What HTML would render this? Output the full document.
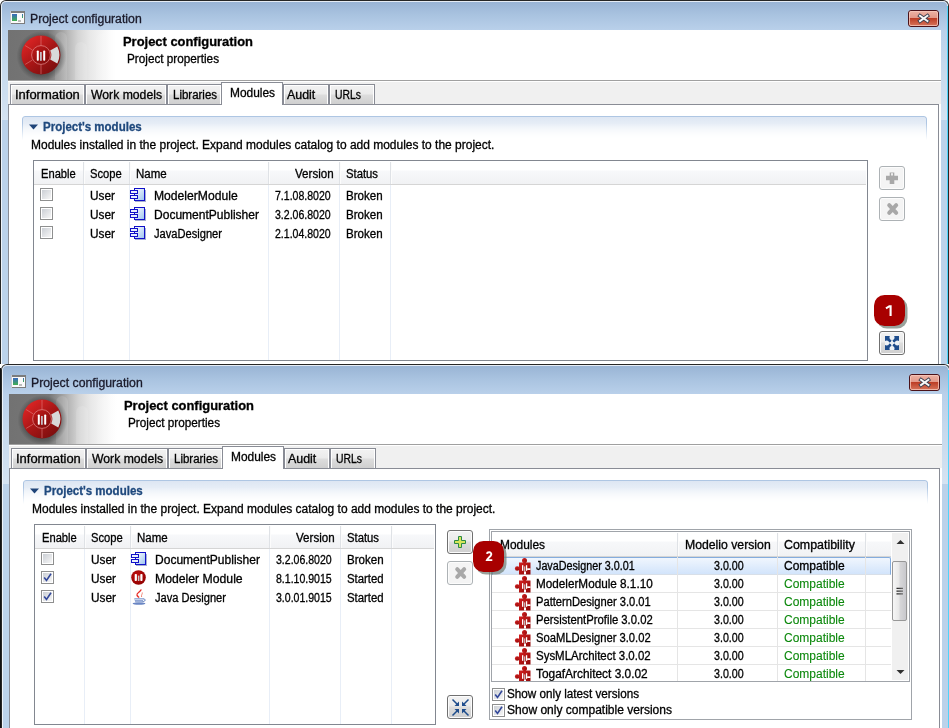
<!DOCTYPE html>
<html><head><meta charset="utf-8"><style>
html,body{margin:0;padding:0;background:#fff;width:949px;height:728px;overflow:hidden;position:relative}
.t{position:absolute;font-family:"Liberation Sans",sans-serif;white-space:pre;transform-origin:0 0;-webkit-text-stroke:0.3px currentColor}
svg{overflow:visible}
</style></head><body>
<div style="position:absolute;left:0px;top:0px;width:949px;height:364px;box-sizing:border-box;border:1px solid #262626;border-bottom:none;border-radius:6px 6px 0 0;background:linear-gradient(#98b3d4 0px,#a9c3e0 14px,#b9d0ea 29px,#bbd2ea 60px);overflow:hidden"></div>
<div style="position:absolute;left:1px;top:1px;width:947px;height:363px;box-sizing:border-box;border:1px solid rgba(255,255,255,0.75);border-bottom:none;border-radius:5px 5px 0 0"></div>
<div style="position:absolute;left:2px;top:28px;width:6px;height:92px;background:linear-gradient(rgba(255,255,255,0) 0%,rgba(255,255,255,0.38) 100%)"></div>
<div style="position:absolute;left:941px;top:28px;width:6px;height:92px;background:linear-gradient(rgba(255,255,255,0) 0%,rgba(255,255,255,0.38) 100%)"></div>
<div style="position:absolute;left:947px;top:6px;width:1px;height:358px;background:#4fd3fa"></div>
<svg style="position:absolute;left:10px;top:11px;" width="15" height="13" viewBox="0 0 15 13">
<defs><linearGradient id="tig" x1="0" y1="0" x2="0" y2="1">
<stop offset="0" stop-color="#3a68c0"></stop><stop offset="1" stop-color="#40b050"></stop></linearGradient></defs>
<rect x="0" y="0" width="15" height="13" fill="#fafafa"></rect>
<rect x="0" y="0" width="15" height="2" fill="#7c7c7c"></rect>
<rect x="14" y="0" width="1" height="13" fill="#7c7c7c"></rect>
<rect x="0" y="12" width="15" height="1" fill="#7c7c7c"></rect>
<rect x="0" y="0" width="1" height="13" fill="#c8c8d0"></rect>
<rect x="2" y="3" width="5" height="7" fill="url(#tig)"></rect>
<rect x="12" y="3" width="1" height="4" fill="url(#tig)"></rect>
<rect x="8" y="9" width="3" height="2" fill="#bcbcbc"></rect>
</svg>
<div class="t" style="left: 30px; top: 12px; font-size: 12px; line-height: 14px; color: rgb(26, 26, 42); transform: scaleX(1.021);">Project configuration</div>
<svg style="position:absolute;left:908px;top:10px;" width="31" height="17" viewBox="0 0 31 17">
<defs><linearGradient id="cbg" x1="0" y1="0" x2="0" y2="1">
<stop offset="0" stop-color="#eeb4a6"></stop><stop offset="0.47" stop-color="#e29888"></stop>
<stop offset="0.48" stop-color="#bc3c24"></stop><stop offset="1" stop-color="#d8785e"></stop></linearGradient></defs>
<rect x="0.5" y="0.5" width="30" height="16" rx="2.5" fill="url(#cbg)" stroke="#4a1219"></rect>
<rect x="1.5" y="1.5" width="28" height="14" rx="1.5" fill="none" stroke="#f6c8bc" stroke-opacity="0.8"></rect>
<path d="M12 5.8 L19.4 11 M19.4 5.8 L12 11" stroke="#3c4050" stroke-width="3.8" stroke-linecap="square"></path>
<path d="M12 5.8 L19.4 11 M19.4 5.8 L12 11" stroke="#f8f8f8" stroke-width="2.0" stroke-linecap="square"></path>
</svg>
<div style="position:absolute;left:8px;top:30px;width:933px;height:334px;background:#f0f0f0"></div>
<div style="position:absolute;left:8px;top:30px;width:933px;height:50px;background:linear-gradient(90deg,#727272 0px,#767676 40px,#9c9c9c 52px,#b8b8b8 60px,#d4d4d4 70px,#e8e8e8 82px,#f4f4f4 94px,#fcfcfc 102px,#ffffff 108px)"></div>
<div style="position:absolute;left:55px;top:32px;width:12px;height:48px;background:rgba(255,255,255,0.12);border-radius:6px 6px 0 0"></div>
<div style="position:absolute;left:75px;top:42px;width:12px;height:38px;background:rgba(255,255,255,0.13);border-radius:6px 6px 0 0"></div>
<div style="position:absolute;left:96px;top:33px;width:15px;height:47px;background:rgba(255,255,255,0.10);border-radius:7px 7px 0 0"></div>
<svg style="position:absolute;left:19.299999999999997px;top:32.5px;" width="48" height="48" viewBox="0 0 48 48">
<defs>
<linearGradient id="lgr" x1="0.15" y1="0.1" x2="0.85" y2="0.9">
<stop offset="0" stop-color="#dc2424"></stop><stop offset="0.5" stop-color="#a81616"></stop><stop offset="1" stop-color="#7c0e0e"></stop></linearGradient>
<linearGradient id="lgi" x1="0.2" y1="0.1" x2="0.8" y2="0.9">
<stop offset="0" stop-color="#b81818"></stop><stop offset="1" stop-color="#840c0c"></stop></linearGradient>
<radialGradient id="lsh" cx="0.5" cy="0.5" r="0.5">
<stop offset="0.72" stop-color="#000" stop-opacity="0.32"></stop><stop offset="1" stop-color="#000" stop-opacity="0"></stop></radialGradient>
</defs>
<circle cx="22.5" cy="23" r="25" fill="url(#lsh)"></circle>
<circle cx="22" cy="22" r="19.5" fill="url(#lgr)"></circle>
<path d="M31.2 17.5 L38.3 13.5 A19 19 0 0 1 38.3 30.5 L31.2 26.5 A9.8 9.8 0 0 0 31.2 17.5 Z" fill="#d8d8d8"></path>
<circle cx="22" cy="22" r="9.4" fill="url(#lgi)" stroke="#e08080" stroke-width="0.8"></circle>
<rect x="17.8" y="17.4" width="2" height="10.4" rx="0.8" fill="#fff"></rect>
<rect x="21.1" y="19" width="1.6" height="8.8" fill="#c8d0d8"></rect>
<rect x="24.2" y="17.4" width="2" height="10.4" rx="0.8" fill="#fff"></rect>
<path d="M22 3 V12.4 M22 31.6 V41 M6.2 12.6 L13.4 17 M6.2 31.4 L13.4 27" stroke="#e89090" stroke-width="0.6" stroke-opacity="0.85"></path>
</svg>
<div style="position:absolute;left:8px;top:80px;width:933px;height:1px;background:#a0a0a0"></div>
<div style="position:absolute;left:8px;top:81px;width:933px;height:1px;background:#ffffff"></div>
<div class="t" style="left: 123px; top: 34px; font-size: 13px; line-height: 15px; color: rgb(0, 0, 0); font-weight: bold; transform: scaleX(0.994);">Project configuration</div>
<div class="t" style="left: 127px; top: 52px; font-size: 12px; line-height: 14px; color: rgb(0, 0, 0); transform: scaleX(0.9783);">Project properties</div>
<div style="position:absolute;left:8px;top:104px;width:931px;height:260px;background:#fff;border:1px solid #898c95;border-bottom:none;box-sizing:border-box"></div>
<div style="position:absolute;left:939px;top:104px;width:2px;height:260px;background:#fff"></div>
<div style="position:absolute;left:10px;top:84px;width:75px;height:21px;box-sizing:border-box;border:1px solid #898c95;background:linear-gradient(#f2f2f2 0px,#ebebeb 9px,#dddddd 10px,#cfcfcf 19px);box-shadow:inset 1px 1px 0 #fff, inset -1px 0 0 #fff"></div>
<div class="t" style="left: 14.92px; top: 88px; font-size: 12px; line-height: 14px; color: rgb(0, 0, 0); transform: scaleX(1.0796);">Information</div>
<div style="position:absolute;left:85px;top:84px;width:82px;height:21px;box-sizing:border-box;border:1px solid #898c95;background:linear-gradient(#f2f2f2 0px,#ebebeb 9px,#dddddd 10px,#cfcfcf 19px);box-shadow:inset 1px 1px 0 #fff, inset -1px 0 0 #fff"></div>
<div class="t" style="left: 91px; top: 88px; font-size: 12px; line-height: 14px; color: rgb(0, 0, 0); transform: scaleX(1.0172);">Work models</div>
<div style="position:absolute;left:167px;top:84px;width:55px;height:21px;box-sizing:border-box;border:1px solid #898c95;background:linear-gradient(#f2f2f2 0px,#ebebeb 9px,#dddddd 10px,#cfcfcf 19px);box-shadow:inset 1px 1px 0 #fff, inset -1px 0 0 #fff"></div>
<div class="t" style="left: 173px; top: 88px; font-size: 12px; line-height: 14px; color: rgb(0, 0, 0); transform: scaleX(0.9561);">Libraries</div>
<div style="position:absolute;left:283px;top:84px;width:46px;height:21px;box-sizing:border-box;border:1px solid #898c95;background:linear-gradient(#f2f2f2 0px,#ebebeb 9px,#dddddd 10px,#cfcfcf 19px);box-shadow:inset 1px 1px 0 #fff, inset -1px 0 0 #fff"></div>
<div class="t" style="left: 287px; top: 88px; font-size: 12px; line-height: 14px; color: rgb(0, 0, 0); transform: scaleX(1.0351);">Audit</div>
<div style="position:absolute;left:329px;top:84px;width:46px;height:21px;box-sizing:border-box;border:1px solid #898c95;background:linear-gradient(#f2f2f2 0px,#ebebeb 9px,#dddddd 10px,#cfcfcf 19px);box-shadow:inset 1px 1px 0 #fff, inset -1px 0 0 #fff"></div>
<div class="t" style="left: 335px; top: 88px; font-size: 12px; line-height: 14px; color: rgb(0, 0, 0); transform: scaleX(0.8665);">URLs</div>
<div style="position:absolute;left:221px;top:82px;width:62px;height:23px;box-sizing:border-box;border:1px solid #898c95;border-bottom:none;background:#fff"></div>
<div class="t" style="left: 230px; top: 86px; font-size: 12px; line-height: 14px; color: rgb(0, 0, 0); transform: scaleX(0.9921);">Modules</div>
<div style="position:absolute;left:22px;top:116px;width:905px;height:24px;box-sizing:border-box;border:1px solid #aec6e3;border-bottom:none;border-radius:3px 3px 0 0;background:linear-gradient(#dde6f3 0px,#eef3f9 12px,#ffffff 23px);-webkit-mask-image:linear-gradient(#000 30%,rgba(0,0,0,0))"></div>
<svg style="position:absolute;left:29px;top:124px;" width="9" height="6" viewBox="0 0 9 6"><path d="M0 0.5 H9 L4.5 5.5 Z" fill="#1f4478"></path></svg>
<div class="t" style="left: 43px; top: 120px; font-size: 12px; line-height: 14px; color: rgb(31, 73, 125); font-weight: bold; transform: scaleX(0.9592);">Project's modules</div>
<div class="t" style="left: 31px; top: 138px; font-size: 12px; line-height: 14px; color: rgb(0, 0, 0); transform: scaleX(0.998);">Modules installed in the project. Expand modules catalog to add modules to the project.</div>
<div style="position:absolute;left:33px;top:160px;width:835px;height:201px;box-sizing:border-box;border:1px solid #828790;background:#fff"></div>
<div style="position:absolute;left:34px;top:161px;width:832px;height:23px;background:linear-gradient(#ffffff 0px,#ffffff 9px,#f7f8fa 10px,#f1f2f4 23px)"></div>
<div style="position:absolute;left:34px;top:184px;width:832px;height:1px;background:#d5d5d5"></div>
<div style="position:absolute;left:83px;top:162px;width:1px;height:22px;background:#dfe2e6"></div>
<div style="position:absolute;left:84px;top:162px;width:1px;height:22px;background:#fcfcfc"></div>
<div style="position:absolute;left:83px;top:185px;width:1px;height:175px;background:#e8eef7"></div>
<div style="position:absolute;left:129px;top:162px;width:1px;height:22px;background:#dfe2e6"></div>
<div style="position:absolute;left:130px;top:162px;width:1px;height:22px;background:#fcfcfc"></div>
<div style="position:absolute;left:129px;top:185px;width:1px;height:175px;background:#e8eef7"></div>
<div style="position:absolute;left:268px;top:162px;width:1px;height:22px;background:#dfe2e6"></div>
<div style="position:absolute;left:269px;top:162px;width:1px;height:22px;background:#fcfcfc"></div>
<div style="position:absolute;left:268px;top:185px;width:1px;height:175px;background:#e8eef7"></div>
<div style="position:absolute;left:339px;top:162px;width:1px;height:22px;background:#dfe2e6"></div>
<div style="position:absolute;left:340px;top:162px;width:1px;height:22px;background:#fcfcfc"></div>
<div style="position:absolute;left:339px;top:185px;width:1px;height:175px;background:#e8eef7"></div>
<div style="position:absolute;left:390px;top:162px;width:1px;height:22px;background:#dfe2e6"></div>
<div style="position:absolute;left:391px;top:162px;width:1px;height:22px;background:#fcfcfc"></div>
<div style="position:absolute;left:390px;top:185px;width:1px;height:175px;background:#e8eef7"></div>
<div class="t" style="left: 41px; top: 167px; font-size: 12px; line-height: 14px; color: rgb(0, 0, 0); transform: scaleX(0.9286);">Enable</div>
<div class="t" style="left: 90px; top: 167px; font-size: 12px; line-height: 14px; color: rgb(0, 0, 0); transform: scaleX(0.9315);">Scope</div>
<div class="t" style="left: 136px; top: 167px; font-size: 12px; line-height: 14px; color: rgb(0, 0, 0); transform: scaleX(0.9587);">Name</div>
<div class="t" style="left: 295px; top: 167px; font-size: 12px; line-height: 14px; color: rgb(0, 0, 0); transform: scaleX(0.9657);">Version</div>
<div class="t" style="left: 346px; top: 167px; font-size: 12px; line-height: 14px; color: rgb(0, 0, 0); transform: scaleX(0.9406);">Status</div>
<svg style="position:absolute;left:40px;top:188px;" width="13" height="13" viewBox="0 0 13 13">
<defs><linearGradient id="cbx40188" x1="0" y1="0" x2="1" y2="1">
<stop offset="0" stop-color="#cbcfd5"></stop><stop offset="1" stop-color="#f6f6f6"></stop></linearGradient></defs>
<rect x="0.5" y="0.5" width="12" height="12" fill="#fff" stroke="#8e8f8f"></rect>
<rect x="2" y="2" width="9" height="9" fill="url(#cbx40188)"></rect>

</svg>
<div class="t" style="left: 90px; top: 189px; font-size: 12px; line-height: 14px; color: rgb(0, 0, 0); transform: scaleX(0.9866);">User</div>
<svg style="position:absolute;left:130px;top:188px;" width="16" height="14" viewBox="0 0 16 14">
<defs><linearGradient id="cig" x1="0" y1="0" x2="1" y2="1">
<stop offset="0" stop-color="#ffffff"></stop><stop offset="1" stop-color="#9cc4f0"></stop></linearGradient></defs>
<rect x="4.5" y="0.5" width="10" height="12" fill="url(#cig)" stroke="#1010c8"></rect>
<rect x="15" y="2" width="1" height="11" fill="#6a7ab0" opacity="0.6"></rect>
<rect x="5" y="13" width="11" height="1" fill="#6a7ab0" opacity="0.6"></rect>
<rect x="0.5" y="2.5" width="7" height="3" fill="#e8f0ff" stroke="#1010c8"></rect>
<rect x="0.5" y="7.5" width="7" height="3" fill="#e8f0ff" stroke="#1010c8"></rect>
</svg>
<div class="t" style="left: 154px; top: 189px; font-size: 12px; line-height: 14px; color: rgb(0, 0, 0); transform: scaleX(1.0116);">ModelerModule</div>
<div class="t" style="left: 275px; top: 189px; font-size: 12px; line-height: 14px; color: rgb(0, 0, 0); transform: scaleX(0.8789);">7.1.08.8020</div>
<div class="t" style="left: 346px; top: 189px; font-size: 12px; line-height: 14px; color: rgb(0, 0, 0); transform: scaleX(0.9639);">Broken</div>
<svg style="position:absolute;left:40px;top:207px;" width="13" height="13" viewBox="0 0 13 13">
<defs><linearGradient id="cbx40207" x1="0" y1="0" x2="1" y2="1">
<stop offset="0" stop-color="#cbcfd5"></stop><stop offset="1" stop-color="#f6f6f6"></stop></linearGradient></defs>
<rect x="0.5" y="0.5" width="12" height="12" fill="#fff" stroke="#8e8f8f"></rect>
<rect x="2" y="2" width="9" height="9" fill="url(#cbx40207)"></rect>

</svg>
<div class="t" style="left: 90px; top: 208px; font-size: 12px; line-height: 14px; color: rgb(0, 0, 0); transform: scaleX(0.9866);">User</div>
<svg style="position:absolute;left:130px;top:207px;" width="16" height="14" viewBox="0 0 16 14">
<defs><linearGradient id="cig" x1="0" y1="0" x2="1" y2="1">
<stop offset="0" stop-color="#ffffff"></stop><stop offset="1" stop-color="#9cc4f0"></stop></linearGradient></defs>
<rect x="4.5" y="0.5" width="10" height="12" fill="url(#cig)" stroke="#1010c8"></rect>
<rect x="15" y="2" width="1" height="11" fill="#6a7ab0" opacity="0.6"></rect>
<rect x="5" y="13" width="11" height="1" fill="#6a7ab0" opacity="0.6"></rect>
<rect x="0.5" y="2.5" width="7" height="3" fill="#e8f0ff" stroke="#1010c8"></rect>
<rect x="0.5" y="7.5" width="7" height="3" fill="#e8f0ff" stroke="#1010c8"></rect>
</svg>
<div class="t" style="left: 154px; top: 208px; font-size: 12px; line-height: 14px; color: rgb(0, 0, 0); transform: scaleX(1.0026);">DocumentPublisher</div>
<div class="t" style="left: 275px; top: 208px; font-size: 12px; line-height: 14px; color: rgb(0, 0, 0); transform: scaleX(0.8789);">3.2.06.8020</div>
<div class="t" style="left: 346px; top: 208px; font-size: 12px; line-height: 14px; color: rgb(0, 0, 0); transform: scaleX(0.9639);">Broken</div>
<svg style="position:absolute;left:40px;top:226px;" width="13" height="13" viewBox="0 0 13 13">
<defs><linearGradient id="cbx40226" x1="0" y1="0" x2="1" y2="1">
<stop offset="0" stop-color="#cbcfd5"></stop><stop offset="1" stop-color="#f6f6f6"></stop></linearGradient></defs>
<rect x="0.5" y="0.5" width="12" height="12" fill="#fff" stroke="#8e8f8f"></rect>
<rect x="2" y="2" width="9" height="9" fill="url(#cbx40226)"></rect>

</svg>
<div class="t" style="left: 90px; top: 227px; font-size: 12px; line-height: 14px; color: rgb(0, 0, 0); transform: scaleX(0.9866);">User</div>
<svg style="position:absolute;left:130px;top:226px;" width="16" height="14" viewBox="0 0 16 14">
<defs><linearGradient id="cig" x1="0" y1="0" x2="1" y2="1">
<stop offset="0" stop-color="#ffffff"></stop><stop offset="1" stop-color="#9cc4f0"></stop></linearGradient></defs>
<rect x="4.5" y="0.5" width="10" height="12" fill="url(#cig)" stroke="#1010c8"></rect>
<rect x="15" y="2" width="1" height="11" fill="#6a7ab0" opacity="0.6"></rect>
<rect x="5" y="13" width="11" height="1" fill="#6a7ab0" opacity="0.6"></rect>
<rect x="0.5" y="2.5" width="7" height="3" fill="#e8f0ff" stroke="#1010c8"></rect>
<rect x="0.5" y="7.5" width="7" height="3" fill="#e8f0ff" stroke="#1010c8"></rect>
</svg>
<div class="t" style="left: 154px; top: 227px; font-size: 12px; line-height: 14px; color: rgb(0, 0, 0); transform: scaleX(0.9267);">JavaDesigner</div>
<div class="t" style="left: 275px; top: 227px; font-size: 12px; line-height: 14px; color: rgb(0, 0, 0); transform: scaleX(0.8789);">2.1.04.8020</div>
<div class="t" style="left: 346px; top: 227px; font-size: 12px; line-height: 14px; color: rgb(0, 0, 0); transform: scaleX(0.9639);">Broken</div>
<div style="position:absolute;left:879px;top:166px;width:26px;height:24px;box-sizing:border-box;border:1px solid #adb2b5;border-radius:3px;background:#f4f4f4;box-shadow:inset 0 0 0 1px #fcfcfc"></div>
<svg style="position:absolute;left:886px;top:172px;" width="12" height="12" viewBox="0 0 12 12"><path d="M3.7 0.5 H8.3 V3.7 H12 V8.3 H8.3 V12 H3.7 V8.3 H0 V3.7 H3.7 Z" fill="#a8a8a8"></path><rect x="5" y="1.2" width="2" height="2.3" fill="#ececec"></rect></svg>
<div style="position:absolute;left:879px;top:197px;width:26px;height:24px;box-sizing:border-box;border:1px solid #adb2b5;border-radius:3px;background:#f4f4f4;box-shadow:inset 0 0 0 1px #fcfcfc"></div>
<svg style="position:absolute;left:887px;top:203px;" width="12" height="12" viewBox="0 0 12 12"><path d="M2.2 2.2 L9.2 9.8 M9.2 2.2 L2.2 9.8" stroke="#a8a8a8" stroke-width="4" stroke-linecap="round"></path></svg>
<svg style="position:absolute;left:874px;top:295px;" width="34" height="34" viewBox="0 0 34 34">
<rect x="2.5" y="2.5" width="31" height="31" rx="10.5" fill="#6e7a70" fill-opacity="0.7"></rect>
<rect x="0" y="0" width="31" height="31" rx="10.5" fill="#a80000"></rect>
<path d="M12 13.4 L15.4 11.2 H16.6 V21" stroke="#fff" stroke-width="2.1" fill="none" stroke-linejoin="miter"></path>
</svg>
<div style="position:absolute;left:879px;top:331px;width:26px;height:24px;box-sizing:border-box;border:1px solid #707070;border-radius:3px;background:linear-gradient(#f2f2f2 0px,#ebebeb 10px,#dddddd 11px,#cfcfcf 22px);box-shadow:inset 0 0 0 1px #fcfcfc"></div>
<svg style="position:absolute;left:885px;top:336px;" width="14" height="14" viewBox="0 0 14 14"><defs><clipPath id="exc"><rect x="0" y="0" width="14" height="14"></rect></clipPath></defs><rect x="0" y="0" width="14" height="14" fill="#1f4d8c"></rect><g fill="#eef2f6" clip-path="url(#exc)"><circle cx="7" cy="1.6" r="2.5"></circle><circle cx="7" cy="12.4" r="2.5"></circle><circle cx="1.6" cy="7" r="2.5"></circle><circle cx="12.4" cy="7" r="2.5"></circle><path d="M7 4.6 L9.4 7 L7 9.4 L4.6 7 Z"></path><rect x="6.4" y="2" width="1.2" height="10"></rect><rect x="2" y="6.4" width="10" height="1.2"></rect></g></svg>
<div style="position:absolute;left:1px;top:364px;width:949px;height:364px;box-sizing:border-box;border:1px solid #262626;border-bottom:none;border-radius:6px 6px 0 0;background:linear-gradient(#98b3d4 0px,#a9c3e0 14px,#b9d0ea 29px,#bbd2ea 60px);overflow:hidden"></div>
<div style="position:absolute;left:2px;top:365px;width:947px;height:363px;box-sizing:border-box;border:1px solid rgba(255,255,255,0.75);border-bottom:none;border-radius:5px 5px 0 0"></div>
<div style="position:absolute;left:3px;top:392px;width:6px;height:92px;background:linear-gradient(rgba(255,255,255,0) 0%,rgba(255,255,255,0.38) 100%)"></div>
<div style="position:absolute;left:942px;top:392px;width:6px;height:92px;background:linear-gradient(rgba(255,255,255,0) 0%,rgba(255,255,255,0.38) 100%)"></div>
<div style="position:absolute;left:948px;top:370px;width:1px;height:358px;background:#4fd3fa"></div>
<svg style="position:absolute;left:11px;top:375px;" width="15" height="13" viewBox="0 0 15 13">
<defs><linearGradient id="tig" x1="0" y1="0" x2="0" y2="1">
<stop offset="0" stop-color="#3a68c0"></stop><stop offset="1" stop-color="#40b050"></stop></linearGradient></defs>
<rect x="0" y="0" width="15" height="13" fill="#fafafa"></rect>
<rect x="0" y="0" width="15" height="2" fill="#7c7c7c"></rect>
<rect x="14" y="0" width="1" height="13" fill="#7c7c7c"></rect>
<rect x="0" y="12" width="15" height="1" fill="#7c7c7c"></rect>
<rect x="0" y="0" width="1" height="13" fill="#c8c8d0"></rect>
<rect x="2" y="3" width="5" height="7" fill="url(#tig)"></rect>
<rect x="12" y="3" width="1" height="4" fill="url(#tig)"></rect>
<rect x="8" y="9" width="3" height="2" fill="#bcbcbc"></rect>
</svg>
<div class="t" style="left: 31px; top: 376px; font-size: 12px; line-height: 14px; color: rgb(26, 26, 42); transform: scaleX(1.021);">Project configuration</div>
<svg style="position:absolute;left:909px;top:374px;" width="31" height="17" viewBox="0 0 31 17">
<defs><linearGradient id="cbg" x1="0" y1="0" x2="0" y2="1">
<stop offset="0" stop-color="#eeb4a6"></stop><stop offset="0.47" stop-color="#e29888"></stop>
<stop offset="0.48" stop-color="#bc3c24"></stop><stop offset="1" stop-color="#d8785e"></stop></linearGradient></defs>
<rect x="0.5" y="0.5" width="30" height="16" rx="2.5" fill="url(#cbg)" stroke="#4a1219"></rect>
<rect x="1.5" y="1.5" width="28" height="14" rx="1.5" fill="none" stroke="#f6c8bc" stroke-opacity="0.8"></rect>
<path d="M12 5.8 L19.4 11 M19.4 5.8 L12 11" stroke="#3c4050" stroke-width="3.8" stroke-linecap="square"></path>
<path d="M12 5.8 L19.4 11 M19.4 5.8 L12 11" stroke="#f8f8f8" stroke-width="2.0" stroke-linecap="square"></path>
</svg>
<div style="position:absolute;left:9px;top:394px;width:933px;height:334px;background:#f0f0f0"></div>
<div style="position:absolute;left:9px;top:394px;width:933px;height:50px;background:linear-gradient(90deg,#727272 0px,#767676 40px,#9c9c9c 52px,#b8b8b8 60px,#d4d4d4 70px,#e8e8e8 82px,#f4f4f4 94px,#fcfcfc 102px,#ffffff 108px)"></div>
<div style="position:absolute;left:56px;top:396px;width:12px;height:48px;background:rgba(255,255,255,0.12);border-radius:6px 6px 0 0"></div>
<div style="position:absolute;left:76px;top:406px;width:12px;height:38px;background:rgba(255,255,255,0.13);border-radius:6px 6px 0 0"></div>
<div style="position:absolute;left:97px;top:397px;width:15px;height:47px;background:rgba(255,255,255,0.10);border-radius:7px 7px 0 0"></div>
<svg style="position:absolute;left:20.299999999999997px;top:396.5px;" width="48" height="48" viewBox="0 0 48 48">
<defs>
<linearGradient id="lgr" x1="0.15" y1="0.1" x2="0.85" y2="0.9">
<stop offset="0" stop-color="#dc2424"></stop><stop offset="0.5" stop-color="#a81616"></stop><stop offset="1" stop-color="#7c0e0e"></stop></linearGradient>
<linearGradient id="lgi" x1="0.2" y1="0.1" x2="0.8" y2="0.9">
<stop offset="0" stop-color="#b81818"></stop><stop offset="1" stop-color="#840c0c"></stop></linearGradient>
<radialGradient id="lsh" cx="0.5" cy="0.5" r="0.5">
<stop offset="0.72" stop-color="#000" stop-opacity="0.32"></stop><stop offset="1" stop-color="#000" stop-opacity="0"></stop></radialGradient>
</defs>
<circle cx="22.5" cy="23" r="25" fill="url(#lsh)"></circle>
<circle cx="22" cy="22" r="19.5" fill="url(#lgr)"></circle>
<path d="M31.2 17.5 L38.3 13.5 A19 19 0 0 1 38.3 30.5 L31.2 26.5 A9.8 9.8 0 0 0 31.2 17.5 Z" fill="#d8d8d8"></path>
<circle cx="22" cy="22" r="9.4" fill="url(#lgi)" stroke="#e08080" stroke-width="0.8"></circle>
<rect x="17.8" y="17.4" width="2" height="10.4" rx="0.8" fill="#fff"></rect>
<rect x="21.1" y="19" width="1.6" height="8.8" fill="#c8d0d8"></rect>
<rect x="24.2" y="17.4" width="2" height="10.4" rx="0.8" fill="#fff"></rect>
<path d="M22 3 V12.4 M22 31.6 V41 M6.2 12.6 L13.4 17 M6.2 31.4 L13.4 27" stroke="#e89090" stroke-width="0.6" stroke-opacity="0.85"></path>
</svg>
<div style="position:absolute;left:9px;top:444px;width:933px;height:1px;background:#a0a0a0"></div>
<div style="position:absolute;left:9px;top:445px;width:933px;height:1px;background:#ffffff"></div>
<div class="t" style="left: 124px; top: 398px; font-size: 13px; line-height: 15px; color: rgb(0, 0, 0); font-weight: bold; transform: scaleX(0.994);">Project configuration</div>
<div class="t" style="left: 128px; top: 416px; font-size: 12px; line-height: 14px; color: rgb(0, 0, 0); transform: scaleX(0.9783);">Project properties</div>
<div style="position:absolute;left:9px;top:468px;width:931px;height:260px;background:#fff;border:1px solid #898c95;border-bottom:none;box-sizing:border-box"></div>
<div style="position:absolute;left:940px;top:468px;width:2px;height:260px;background:#fff"></div>
<div style="position:absolute;left:11px;top:448px;width:75px;height:21px;box-sizing:border-box;border:1px solid #898c95;background:linear-gradient(#f2f2f2 0px,#ebebeb 9px,#dddddd 10px,#cfcfcf 19px);box-shadow:inset 1px 1px 0 #fff, inset -1px 0 0 #fff"></div>
<div class="t" style="left: 15.92px; top: 452px; font-size: 12px; line-height: 14px; color: rgb(0, 0, 0); transform: scaleX(1.0796);">Information</div>
<div style="position:absolute;left:86px;top:448px;width:82px;height:21px;box-sizing:border-box;border:1px solid #898c95;background:linear-gradient(#f2f2f2 0px,#ebebeb 9px,#dddddd 10px,#cfcfcf 19px);box-shadow:inset 1px 1px 0 #fff, inset -1px 0 0 #fff"></div>
<div class="t" style="left: 92px; top: 452px; font-size: 12px; line-height: 14px; color: rgb(0, 0, 0); transform: scaleX(1.0172);">Work models</div>
<div style="position:absolute;left:168px;top:448px;width:55px;height:21px;box-sizing:border-box;border:1px solid #898c95;background:linear-gradient(#f2f2f2 0px,#ebebeb 9px,#dddddd 10px,#cfcfcf 19px);box-shadow:inset 1px 1px 0 #fff, inset -1px 0 0 #fff"></div>
<div class="t" style="left: 174px; top: 452px; font-size: 12px; line-height: 14px; color: rgb(0, 0, 0); transform: scaleX(0.9561);">Libraries</div>
<div style="position:absolute;left:284px;top:448px;width:46px;height:21px;box-sizing:border-box;border:1px solid #898c95;background:linear-gradient(#f2f2f2 0px,#ebebeb 9px,#dddddd 10px,#cfcfcf 19px);box-shadow:inset 1px 1px 0 #fff, inset -1px 0 0 #fff"></div>
<div class="t" style="left: 288px; top: 452px; font-size: 12px; line-height: 14px; color: rgb(0, 0, 0); transform: scaleX(1.0351);">Audit</div>
<div style="position:absolute;left:330px;top:448px;width:46px;height:21px;box-sizing:border-box;border:1px solid #898c95;background:linear-gradient(#f2f2f2 0px,#ebebeb 9px,#dddddd 10px,#cfcfcf 19px);box-shadow:inset 1px 1px 0 #fff, inset -1px 0 0 #fff"></div>
<div class="t" style="left: 336px; top: 452px; font-size: 12px; line-height: 14px; color: rgb(0, 0, 0); transform: scaleX(0.8665);">URLs</div>
<div style="position:absolute;left:222px;top:446px;width:62px;height:23px;box-sizing:border-box;border:1px solid #898c95;border-bottom:none;background:#fff"></div>
<div class="t" style="left: 231px; top: 450px; font-size: 12px; line-height: 14px; color: rgb(0, 0, 0); transform: scaleX(0.9921);">Modules</div>
<div style="position:absolute;left:23px;top:480px;width:905px;height:24px;box-sizing:border-box;border:1px solid #aec6e3;border-bottom:none;border-radius:3px 3px 0 0;background:linear-gradient(#dde6f3 0px,#eef3f9 12px,#ffffff 23px);-webkit-mask-image:linear-gradient(#000 30%,rgba(0,0,0,0))"></div>
<svg style="position:absolute;left:30px;top:488px;" width="9" height="6" viewBox="0 0 9 6"><path d="M0 0.5 H9 L4.5 5.5 Z" fill="#1f4478"></path></svg>
<div class="t" style="left: 44px; top: 484px; font-size: 12px; line-height: 14px; color: rgb(31, 73, 125); font-weight: bold; transform: scaleX(0.9592);">Project's modules</div>
<div class="t" style="left: 32px; top: 502px; font-size: 12px; line-height: 14px; color: rgb(0, 0, 0); transform: scaleX(0.998);">Modules installed in the project. Expand modules catalog to add modules to the project.</div>
<div style="position:absolute;left:0px;top:368px;width:1px;height:360px;background:#111"></div>
<div style="position:absolute;left:34px;top:524px;width:402px;height:201px;box-sizing:border-box;border:1px solid #828790;background:#fff"></div>
<div style="position:absolute;left:35px;top:525px;width:399px;height:23px;background:linear-gradient(#ffffff 0px,#ffffff 9px,#f7f8fa 10px,#f1f2f4 23px)"></div>
<div style="position:absolute;left:35px;top:548px;width:399px;height:1px;background:#d5d5d5"></div>
<div style="position:absolute;left:84px;top:526px;width:1px;height:22px;background:#dfe2e6"></div>
<div style="position:absolute;left:85px;top:526px;width:1px;height:22px;background:#fcfcfc"></div>
<div style="position:absolute;left:84px;top:549px;width:1px;height:175px;background:#e8eef7"></div>
<div style="position:absolute;left:130px;top:526px;width:1px;height:22px;background:#dfe2e6"></div>
<div style="position:absolute;left:131px;top:526px;width:1px;height:22px;background:#fcfcfc"></div>
<div style="position:absolute;left:130px;top:549px;width:1px;height:175px;background:#e8eef7"></div>
<div style="position:absolute;left:269px;top:526px;width:1px;height:22px;background:#dfe2e6"></div>
<div style="position:absolute;left:270px;top:526px;width:1px;height:22px;background:#fcfcfc"></div>
<div style="position:absolute;left:269px;top:549px;width:1px;height:175px;background:#e8eef7"></div>
<div style="position:absolute;left:340px;top:526px;width:1px;height:22px;background:#dfe2e6"></div>
<div style="position:absolute;left:341px;top:526px;width:1px;height:22px;background:#fcfcfc"></div>
<div style="position:absolute;left:340px;top:549px;width:1px;height:175px;background:#e8eef7"></div>
<div style="position:absolute;left:391px;top:526px;width:1px;height:22px;background:#dfe2e6"></div>
<div style="position:absolute;left:392px;top:526px;width:1px;height:22px;background:#fcfcfc"></div>
<div style="position:absolute;left:391px;top:549px;width:1px;height:175px;background:#e8eef7"></div>
<div class="t" style="left: 42px; top: 531px; font-size: 12px; line-height: 14px; color: rgb(0, 0, 0); transform: scaleX(0.9286);">Enable</div>
<div class="t" style="left: 91px; top: 531px; font-size: 12px; line-height: 14px; color: rgb(0, 0, 0); transform: scaleX(0.9315);">Scope</div>
<div class="t" style="left: 137px; top: 531px; font-size: 12px; line-height: 14px; color: rgb(0, 0, 0); transform: scaleX(0.9587);">Name</div>
<div class="t" style="left: 296px; top: 531px; font-size: 12px; line-height: 14px; color: rgb(0, 0, 0); transform: scaleX(0.9657);">Version</div>
<div class="t" style="left: 347px; top: 531px; font-size: 12px; line-height: 14px; color: rgb(0, 0, 0); transform: scaleX(0.9406);">Status</div>
<svg style="position:absolute;left:41px;top:552px;" width="13" height="13" viewBox="0 0 13 13">
<defs><linearGradient id="cbx41552" x1="0" y1="0" x2="1" y2="1">
<stop offset="0" stop-color="#cbcfd5"></stop><stop offset="1" stop-color="#f6f6f6"></stop></linearGradient></defs>
<rect x="0.5" y="0.5" width="12" height="12" fill="#fff" stroke="#8e8f8f"></rect>
<rect x="2" y="2" width="9" height="9" fill="url(#cbx41552)"></rect>

</svg>
<div class="t" style="left: 91px; top: 553px; font-size: 12px; line-height: 14px; color: rgb(0, 0, 0); transform: scaleX(0.9866);">User</div>
<svg style="position:absolute;left:131px;top:552px;" width="16" height="14" viewBox="0 0 16 14">
<defs><linearGradient id="cig" x1="0" y1="0" x2="1" y2="1">
<stop offset="0" stop-color="#ffffff"></stop><stop offset="1" stop-color="#9cc4f0"></stop></linearGradient></defs>
<rect x="4.5" y="0.5" width="10" height="12" fill="url(#cig)" stroke="#1010c8"></rect>
<rect x="15" y="2" width="1" height="11" fill="#6a7ab0" opacity="0.6"></rect>
<rect x="5" y="13" width="11" height="1" fill="#6a7ab0" opacity="0.6"></rect>
<rect x="0.5" y="2.5" width="7" height="3" fill="#e8f0ff" stroke="#1010c8"></rect>
<rect x="0.5" y="7.5" width="7" height="3" fill="#e8f0ff" stroke="#1010c8"></rect>
</svg>
<div class="t" style="left: 155px; top: 553px; font-size: 12px; line-height: 14px; color: rgb(0, 0, 0); transform: scaleX(1.0026);">DocumentPublisher</div>
<div class="t" style="left: 276px; top: 553px; font-size: 12px; line-height: 14px; color: rgb(0, 0, 0); transform: scaleX(0.8789);">3.2.06.8020</div>
<div class="t" style="left: 347px; top: 553px; font-size: 12px; line-height: 14px; color: rgb(0, 0, 0); transform: scaleX(0.9639);">Broken</div>
<svg style="position:absolute;left:41px;top:571px;" width="13" height="13" viewBox="0 0 13 13">
<defs><linearGradient id="cbx41571" x1="0" y1="0" x2="1" y2="1">
<stop offset="0" stop-color="#cbcfd5"></stop><stop offset="1" stop-color="#f6f6f6"></stop></linearGradient></defs>
<rect x="0.5" y="0.5" width="12" height="12" fill="#fff" stroke="#8e8f8f"></rect>
<rect x="2" y="2" width="9" height="9" fill="url(#cbx41571)"></rect>
<path d="M3.2 6.5 L5.5 9.5 L10 2.8" stroke="#33489a" stroke-width="1.6" fill="none"></path>
</svg>
<div class="t" style="left: 91px; top: 572px; font-size: 12px; line-height: 14px; color: rgb(0, 0, 0); transform: scaleX(0.9866);">User</div>
<svg style="position:absolute;left:131px;top:570px;" width="15" height="15" viewBox="0 0 15 15">
<defs><radialGradient id="mig" cx="0.4" cy="0.35" r="0.7">
<stop offset="0" stop-color="#c01010"></stop><stop offset="1" stop-color="#900000"></stop></radialGradient></defs>
<circle cx="7.5" cy="7.5" r="7.3" fill="url(#mig)"></circle>
<rect x="3.7" y="4" width="2.2" height="7" rx="0.8" fill="#fff"></rect>
<rect x="6.9" y="5.6" width="1.5" height="5.4" fill="#c8c8c8"></rect>
<rect x="9.3" y="4" width="2.2" height="7" rx="0.8" fill="#fff"></rect>
</svg>
<div class="t" style="left: 155px; top: 572px; font-size: 12px; line-height: 14px; color: rgb(0, 0, 0); transform: scaleX(1.0189);">Modeler Module</div>
<div class="t" style="left: 276px; top: 572px; font-size: 12px; line-height: 14px; color: rgb(0, 0, 0); transform: scaleX(0.8789);">8.1.10.9015</div>
<div class="t" style="left: 347px; top: 572px; font-size: 12px; line-height: 14px; color: rgb(0, 0, 0); transform: scaleX(0.947);">Started</div>
<svg style="position:absolute;left:41px;top:590px;" width="13" height="13" viewBox="0 0 13 13">
<defs><linearGradient id="cbx41590" x1="0" y1="0" x2="1" y2="1">
<stop offset="0" stop-color="#cbcfd5"></stop><stop offset="1" stop-color="#f6f6f6"></stop></linearGradient></defs>
<rect x="0.5" y="0.5" width="12" height="12" fill="#fff" stroke="#8e8f8f"></rect>
<rect x="2" y="2" width="9" height="9" fill="url(#cbx41590)"></rect>
<path d="M3.2 6.5 L5.5 9.5 L10 2.8" stroke="#33489a" stroke-width="1.6" fill="none"></path>
</svg>
<div class="t" style="left: 91px; top: 591px; font-size: 12px; line-height: 14px; color: rgb(0, 0, 0); transform: scaleX(0.9866);">User</div>
<svg style="position:absolute;left:131px;top:589px;" width="16" height="16" viewBox="0 0 16 16">
<path d="M10 0.3 C10.5 2.5 5.5 3.5 6 6 C6.3 7.2 7.5 8 8 8.6" stroke="#e8302a" stroke-width="1.4" fill="none"></path>
<path d="M11.3 3.5 C11.6 5 10 6 10.6 8" stroke="#f08070" stroke-width="1" fill="none"></path>
<path d="M3.2 9.2 H12.6 L11.6 13.4 H4.4 Z" fill="#7d96cc"></path>
<path d="M3.8 10.6 H12" stroke="#e4eaf6" stroke-width="0.8"></path>
<path d="M4.3 12.2 H11.6" stroke="#c4d0ea" stroke-width="0.7"></path>
<path d="M12.3 9.8 C14.8 9.8 14.8 12.4 11.6 12.8" stroke="#5a78b8" stroke-width="1" fill="none"></path>
<ellipse cx="8" cy="14.6" rx="6.4" ry="1.1" fill="#6a86c4"></ellipse>
</svg>
<div class="t" style="left: 155px; top: 591px; font-size: 12px; line-height: 14px; color: rgb(0, 0, 0); transform: scaleX(0.9256);">Java Designer</div>
<div class="t" style="left: 276px; top: 591px; font-size: 12px; line-height: 14px; color: rgb(0, 0, 0); transform: scaleX(0.8789);">3.0.01.9015</div>
<div class="t" style="left: 347px; top: 591px; font-size: 12px; line-height: 14px; color: rgb(0, 0, 0); transform: scaleX(0.947);">Started</div>
<div style="position:absolute;left:489px;top:529px;width:423px;height:191px;box-sizing:border-box;border:1px solid #a0a4aa;background:#fff"></div>
<div style="position:absolute;left:491px;top:531px;width:419px;height:151px;box-sizing:border-box;border:1px solid #a0a4aa;background:#fff"></div>
<div style="position:absolute;left:492px;top:532px;width:399px;height:24px;background:linear-gradient(#ffffff 0px,#ffffff 9px,#f7f8fa 10px,#f1f2f4 24px)"></div>
<div style="position:absolute;left:492px;top:556px;width:399px;height:1px;background:#d5d5d5"></div>
<div style="position:absolute;left:677px;top:533px;width:1px;height:23px;background:#dfe2e6"></div>
<div style="position:absolute;left:678px;top:533px;width:1px;height:23px;background:#fcfcfc"></div>
<div style="position:absolute;left:777px;top:533px;width:1px;height:23px;background:#dfe2e6"></div>
<div style="position:absolute;left:778px;top:533px;width:1px;height:23px;background:#fcfcfc"></div>
<div style="position:absolute;left:865px;top:533px;width:1px;height:23px;background:#dfe2e6"></div>
<div style="position:absolute;left:866px;top:533px;width:1px;height:23px;background:#fcfcfc"></div>
<div class="t" style="left: 500px; top: 538px; font-size: 12px; line-height: 14px; color: rgb(0, 0, 0); transform: scaleX(0.9921);">Modules</div>
<div class="t" style="left: 685px; top: 538px; font-size: 12px; line-height: 14px; color: rgb(0, 0, 0); transform: scaleX(1.0196);">Modelio version</div>
<div class="t" style="left: 784px; top: 538px; font-size: 12px; line-height: 14px; color: rgb(0, 0, 0); transform: scaleX(1.0336);">Compatibility</div>
<div style="position:absolute;left:492px;top:557px;width:400px;height:124px;overflow:hidden">
<div style="position:absolute;left:0px;top:0px;width:399px;height:18px;box-sizing:border-box;border:1px solid #84acdd;border-bottom-color:#d8dfe8;border-radius:2px 2px 0 0;background:linear-gradient(#f0f6fe,#d2e4fb)"></div>
<div style="position:absolute;left:0px;top:35px;width:399px;height:1px;background:#e5e5e5"></div>
<div style="position:absolute;left:0px;top:53px;width:399px;height:1px;background:#e5e5e5"></div>
<div style="position:absolute;left:0px;top:71px;width:399px;height:1px;background:#e5e5e5"></div>
<div style="position:absolute;left:0px;top:89px;width:399px;height:1px;background:#e5e5e5"></div>
<div style="position:absolute;left:0px;top:107px;width:399px;height:1px;background:#e5e5e5"></div>
<div style="position:absolute;left:0px;top:125px;width:399px;height:1px;background:#e5e5e5"></div>
<div style="position:absolute;left:185px;top:0px;width:1px;height:124px;background:#e5e5e5"></div>
<div style="position:absolute;left:285px;top:0px;width:1px;height:124px;background:#e5e5e5"></div>
<div style="position:absolute;left:373px;top:0px;width:1px;height:124px;background:#e5e5e5"></div>
</div>
<div style="position:absolute;left:492px;top:557px;width:400px;height:124px;overflow:hidden">
<div style="position:absolute;left:0;top:0">
<svg style="position:absolute;left:23px;top:0.5px;" width="17" height="17" viewBox="0 0 17 17">
<defs><linearGradient id="pzg" x1="0" y1="0" x2="1" y2="1">
<stop offset="0" stop-color="#d42020"></stop><stop offset="1" stop-color="#8c0808"></stop></linearGradient></defs>
<g fill="url(#pzg)">
<circle cx="9.5" cy="2.6" r="2.5"></circle>
<rect x="8.3" y="3" width="2.4" height="2"></rect>
<circle cx="2.2" cy="10.5" r="2.3"></circle>
<rect x="3" y="9.3" width="2" height="2.4"></rect>
<rect x="4" y="4.5" width="11.5" height="12"></rect>
</g>
<rect x="7" y="7.2" width="1.3" height="5.6" fill="#fff"></rect>
<rect x="9.1" y="8.4" width="1.1" height="5" fill="#c8c8c8"></rect>
<rect x="10.9" y="7.2" width="1.3" height="5.6" fill="#fff"></rect>
<path d="M12.2 10.3 H15.5 V12 H12.2 Z" fill="#fff"></path>
<path d="M9 13.4 H11 V16.5 H9 Z" fill="#fff"></path>
</svg>
<div class="t" style="left: 44px; top: 2px; font-size: 12px; line-height: 14px; color: rgb(0, 0, 0); transform: scaleX(0.8968);">JavaDesigner 3.0.01</div>
<div class="t" style="left: 222px; top: 2px; font-size: 12px; line-height: 14px; color: rgb(0, 0, 0); transform: scaleX(0.8905);">3.0.00</div>
<div class="t" style="left: 292px; top: 2px; font-size: 12px; line-height: 14px; color: rgb(0, 0, 0); transform: scaleX(0.9996);">Compatible</div>
</div>
<div style="position:absolute;left:0;top:0">
<svg style="position:absolute;left:23px;top:18.5px;" width="17" height="17" viewBox="0 0 17 17">
<defs><linearGradient id="pzg" x1="0" y1="0" x2="1" y2="1">
<stop offset="0" stop-color="#d42020"></stop><stop offset="1" stop-color="#8c0808"></stop></linearGradient></defs>
<g fill="url(#pzg)">
<circle cx="9.5" cy="2.6" r="2.5"></circle>
<rect x="8.3" y="3" width="2.4" height="2"></rect>
<circle cx="2.2" cy="10.5" r="2.3"></circle>
<rect x="3" y="9.3" width="2" height="2.4"></rect>
<rect x="4" y="4.5" width="11.5" height="12"></rect>
</g>
<rect x="7" y="7.2" width="1.3" height="5.6" fill="#fff"></rect>
<rect x="9.1" y="8.4" width="1.1" height="5" fill="#c8c8c8"></rect>
<rect x="10.9" y="7.2" width="1.3" height="5.6" fill="#fff"></rect>
<path d="M12.2 10.3 H15.5 V12 H12.2 Z" fill="#fff"></path>
<path d="M9 13.4 H11 V16.5 H9 Z" fill="#fff"></path>
</svg>
<div class="t" style="left: 44px; top: 20px; font-size: 12px; line-height: 14px; color: rgb(0, 0, 0); transform: scaleX(0.9772);">ModelerModule 8.1.10</div>
<div class="t" style="left: 222px; top: 20px; font-size: 12px; line-height: 14px; color: rgb(0, 0, 0); transform: scaleX(0.8905);">3.0.00</div>
<div class="t" style="left: 292px; top: 20px; font-size: 12px; line-height: 14px; color: rgb(12, 136, 12); -webkit-text-stroke: 0.1px currentcolor; transform: scaleX(0.9996);">Compatible</div>
</div>
<div style="position:absolute;left:0;top:0">
<svg style="position:absolute;left:23px;top:36.5px;" width="17" height="17" viewBox="0 0 17 17">
<defs><linearGradient id="pzg" x1="0" y1="0" x2="1" y2="1">
<stop offset="0" stop-color="#d42020"></stop><stop offset="1" stop-color="#8c0808"></stop></linearGradient></defs>
<g fill="url(#pzg)">
<circle cx="9.5" cy="2.6" r="2.5"></circle>
<rect x="8.3" y="3" width="2.4" height="2"></rect>
<circle cx="2.2" cy="10.5" r="2.3"></circle>
<rect x="3" y="9.3" width="2" height="2.4"></rect>
<rect x="4" y="4.5" width="11.5" height="12"></rect>
</g>
<rect x="7" y="7.2" width="1.3" height="5.6" fill="#fff"></rect>
<rect x="9.1" y="8.4" width="1.1" height="5" fill="#c8c8c8"></rect>
<rect x="10.9" y="7.2" width="1.3" height="5.6" fill="#fff"></rect>
<path d="M12.2 10.3 H15.5 V12 H12.2 Z" fill="#fff"></path>
<path d="M9 13.4 H11 V16.5 H9 Z" fill="#fff"></path>
</svg>
<div class="t" style="left: 44px; top: 38px; font-size: 12px; line-height: 14px; color: rgb(0, 0, 0); transform: scaleX(0.9294);">PatternDesigner 3.0.01</div>
<div class="t" style="left: 222px; top: 38px; font-size: 12px; line-height: 14px; color: rgb(0, 0, 0); transform: scaleX(0.8905);">3.0.00</div>
<div class="t" style="left: 292px; top: 38px; font-size: 12px; line-height: 14px; color: rgb(12, 136, 12); -webkit-text-stroke: 0.1px currentcolor; transform: scaleX(0.9996);">Compatible</div>
</div>
<div style="position:absolute;left:0;top:0">
<svg style="position:absolute;left:23px;top:54.5px;" width="17" height="17" viewBox="0 0 17 17">
<defs><linearGradient id="pzg" x1="0" y1="0" x2="1" y2="1">
<stop offset="0" stop-color="#d42020"></stop><stop offset="1" stop-color="#8c0808"></stop></linearGradient></defs>
<g fill="url(#pzg)">
<circle cx="9.5" cy="2.6" r="2.5"></circle>
<rect x="8.3" y="3" width="2.4" height="2"></rect>
<circle cx="2.2" cy="10.5" r="2.3"></circle>
<rect x="3" y="9.3" width="2" height="2.4"></rect>
<rect x="4" y="4.5" width="11.5" height="12"></rect>
</g>
<rect x="7" y="7.2" width="1.3" height="5.6" fill="#fff"></rect>
<rect x="9.1" y="8.4" width="1.1" height="5" fill="#c8c8c8"></rect>
<rect x="10.9" y="7.2" width="1.3" height="5.6" fill="#fff"></rect>
<path d="M12.2 10.3 H15.5 V12 H12.2 Z" fill="#fff"></path>
<path d="M9 13.4 H11 V16.5 H9 Z" fill="#fff"></path>
</svg>
<div class="t" style="left: 44px; top: 56px; font-size: 12px; line-height: 14px; color: rgb(0, 0, 0); transform: scaleX(0.9406);">PersistentProfile 3.0.02</div>
<div class="t" style="left: 222px; top: 56px; font-size: 12px; line-height: 14px; color: rgb(0, 0, 0); transform: scaleX(0.8905);">3.0.00</div>
<div class="t" style="left: 292px; top: 56px; font-size: 12px; line-height: 14px; color: rgb(12, 136, 12); -webkit-text-stroke: 0.1px currentcolor; transform: scaleX(0.9996);">Compatible</div>
</div>
<div style="position:absolute;left:0;top:0">
<svg style="position:absolute;left:23px;top:72.5px;" width="17" height="17" viewBox="0 0 17 17">
<defs><linearGradient id="pzg" x1="0" y1="0" x2="1" y2="1">
<stop offset="0" stop-color="#d42020"></stop><stop offset="1" stop-color="#8c0808"></stop></linearGradient></defs>
<g fill="url(#pzg)">
<circle cx="9.5" cy="2.6" r="2.5"></circle>
<rect x="8.3" y="3" width="2.4" height="2"></rect>
<circle cx="2.2" cy="10.5" r="2.3"></circle>
<rect x="3" y="9.3" width="2" height="2.4"></rect>
<rect x="4" y="4.5" width="11.5" height="12"></rect>
</g>
<rect x="7" y="7.2" width="1.3" height="5.6" fill="#fff"></rect>
<rect x="9.1" y="8.4" width="1.1" height="5" fill="#c8c8c8"></rect>
<rect x="10.9" y="7.2" width="1.3" height="5.6" fill="#fff"></rect>
<path d="M12.2 10.3 H15.5 V12 H12.2 Z" fill="#fff"></path>
<path d="M9 13.4 H11 V16.5 H9 Z" fill="#fff"></path>
</svg>
<div class="t" style="left: 44px; top: 74px; font-size: 12px; line-height: 14px; color: rgb(0, 0, 0); transform: scaleX(0.9344);">SoaMLDesigner 3.0.02</div>
<div class="t" style="left: 222px; top: 74px; font-size: 12px; line-height: 14px; color: rgb(0, 0, 0); transform: scaleX(0.8905);">3.0.00</div>
<div class="t" style="left: 292px; top: 74px; font-size: 12px; line-height: 14px; color: rgb(12, 136, 12); -webkit-text-stroke: 0.1px currentcolor; transform: scaleX(0.9996);">Compatible</div>
</div>
<div style="position:absolute;left:0;top:0">
<svg style="position:absolute;left:23px;top:90.5px;" width="17" height="17" viewBox="0 0 17 17">
<defs><linearGradient id="pzg" x1="0" y1="0" x2="1" y2="1">
<stop offset="0" stop-color="#d42020"></stop><stop offset="1" stop-color="#8c0808"></stop></linearGradient></defs>
<g fill="url(#pzg)">
<circle cx="9.5" cy="2.6" r="2.5"></circle>
<rect x="8.3" y="3" width="2.4" height="2"></rect>
<circle cx="2.2" cy="10.5" r="2.3"></circle>
<rect x="3" y="9.3" width="2" height="2.4"></rect>
<rect x="4" y="4.5" width="11.5" height="12"></rect>
</g>
<rect x="7" y="7.2" width="1.3" height="5.6" fill="#fff"></rect>
<rect x="9.1" y="8.4" width="1.1" height="5" fill="#c8c8c8"></rect>
<rect x="10.9" y="7.2" width="1.3" height="5.6" fill="#fff"></rect>
<path d="M12.2 10.3 H15.5 V12 H12.2 Z" fill="#fff"></path>
<path d="M9 13.4 H11 V16.5 H9 Z" fill="#fff"></path>
</svg>
<div class="t" style="left: 44px; top: 92px; font-size: 12px; line-height: 14px; color: rgb(0, 0, 0); transform: scaleX(0.9553);">SysMLArchitect 3.0.02</div>
<div class="t" style="left: 222px; top: 92px; font-size: 12px; line-height: 14px; color: rgb(0, 0, 0); transform: scaleX(0.8905);">3.0.00</div>
<div class="t" style="left: 292px; top: 92px; font-size: 12px; line-height: 14px; color: rgb(12, 136, 12); -webkit-text-stroke: 0.1px currentcolor; transform: scaleX(0.9996);">Compatible</div>
</div>
<div style="position:absolute;left:0;top:0">
<svg style="position:absolute;left:23px;top:108.5px;" width="17" height="17" viewBox="0 0 17 17">
<defs><linearGradient id="pzg" x1="0" y1="0" x2="1" y2="1">
<stop offset="0" stop-color="#d42020"></stop><stop offset="1" stop-color="#8c0808"></stop></linearGradient></defs>
<g fill="url(#pzg)">
<circle cx="9.5" cy="2.6" r="2.5"></circle>
<rect x="8.3" y="3" width="2.4" height="2"></rect>
<circle cx="2.2" cy="10.5" r="2.3"></circle>
<rect x="3" y="9.3" width="2" height="2.4"></rect>
<rect x="4" y="4.5" width="11.5" height="12"></rect>
</g>
<rect x="7" y="7.2" width="1.3" height="5.6" fill="#fff"></rect>
<rect x="9.1" y="8.4" width="1.1" height="5" fill="#c8c8c8"></rect>
<rect x="10.9" y="7.2" width="1.3" height="5.6" fill="#fff"></rect>
<path d="M12.2 10.3 H15.5 V12 H12.2 Z" fill="#fff"></path>
<path d="M9 13.4 H11 V16.5 H9 Z" fill="#fff"></path>
</svg>
<div class="t" style="left: 44px; top: 110px; font-size: 12px; line-height: 14px; color: rgb(0, 0, 0); transform: scaleX(0.9906);">TogafArchitect 3.0.02</div>
<div class="t" style="left: 222px; top: 110px; font-size: 12px; line-height: 14px; color: rgb(0, 0, 0); transform: scaleX(0.8905);">3.0.00</div>
<div class="t" style="left: 292px; top: 110px; font-size: 12px; line-height: 14px; color: rgb(12, 136, 12); -webkit-text-stroke: 0.1px currentcolor; transform: scaleX(0.9996);">Compatible</div>
</div>
</div>
<div style="position:absolute;left:892px;top:533px;width:16px;height:147px;background:#f0f0f0"></div>
<svg style="position:absolute;left:896px;top:539px;" width="9" height="6" viewBox="0 0 9 6"><path d="M0.5 5 L4.5 1 L8.5 5 Z" fill="#303030"></path></svg>
<svg style="position:absolute;left:896px;top:669px;" width="9" height="6" viewBox="0 0 9 6"><path d="M0.5 1 L4.5 5 L8.5 1 Z" fill="#303030"></path></svg>
<div style="position:absolute;left:892px;top:561px;width:15px;height:60px;box-sizing:border-box;border:1px solid #979797;border-radius:2px;background:linear-gradient(90deg,#f6f6f6,#e8e8e8 45%,#d6d6d8 55%,#c8c8cc)"></div>
<svg style="position:absolute;left:896px;top:587px;" width="8" height="9" viewBox="0 0 8 9"><defs><linearGradient id="grg" x1="0" x2="1"><stop offset="0" stop-color="#202020"></stop><stop offset="1" stop-color="#707070"></stop></linearGradient></defs><path d="M0.5 1.3 H7 M0.5 4.1 H7 M0.5 6.9 H7" stroke="url(#grg)" stroke-width="1.3"></path></svg>
<svg style="position:absolute;left:492px;top:688px;" width="13" height="13" viewBox="0 0 13 13">
<defs><linearGradient id="cbx492688" x1="0" y1="0" x2="1" y2="1">
<stop offset="0" stop-color="#cbcfd5"></stop><stop offset="1" stop-color="#f6f6f6"></stop></linearGradient></defs>
<rect x="0.5" y="0.5" width="12" height="12" fill="#fff" stroke="#8e8f8f"></rect>
<rect x="2" y="2" width="9" height="9" fill="url(#cbx492688)"></rect>
<path d="M3.2 6.5 L5.5 9.5 L10 2.8" stroke="#33489a" stroke-width="1.6" fill="none"></path>
</svg>
<div class="t" style="left: 507px; top: 687px; font-size: 12px; line-height: 14px; color: rgb(0, 0, 0); transform: scaleX(0.9749);">Show only latest versions</div>
<svg style="position:absolute;left:492px;top:704px;" width="13" height="13" viewBox="0 0 13 13">
<defs><linearGradient id="cbx492704" x1="0" y1="0" x2="1" y2="1">
<stop offset="0" stop-color="#cbcfd5"></stop><stop offset="1" stop-color="#f6f6f6"></stop></linearGradient></defs>
<rect x="0.5" y="0.5" width="12" height="12" fill="#fff" stroke="#8e8f8f"></rect>
<rect x="2" y="2" width="9" height="9" fill="url(#cbx492704)"></rect>
<path d="M3.2 6.5 L5.5 9.5 L10 2.8" stroke="#33489a" stroke-width="1.6" fill="none"></path>
</svg>
<div class="t" style="left: 507px; top: 703px; font-size: 12px; line-height: 14px; color: rgb(0, 0, 0); transform: scaleX(1.0015);">Show only compatible versions</div>
<div style="position:absolute;left:447px;top:530px;width:26px;height:24px;box-sizing:border-box;border:1px solid #707070;border-radius:3px;background:linear-gradient(#f2f2f2 0px,#ebebeb 10px,#dddddd 11px,#cfcfcf 22px);box-shadow:inset 0 0 0 1px #fcfcfc"></div>
<svg style="position:absolute;left:454px;top:536px;" width="12" height="12" viewBox="0 0 12 12"><path d="M4.5 0.5 H7.5 V4.5 H11.5 V7.5 H7.5 V11.5 H4.5 V7.5 H0.5 V4.5 H4.5 Z" fill="#d6e65a" stroke="#2c8a44" stroke-width="1"></path></svg>
<div style="position:absolute;left:447px;top:561px;width:26px;height:24px;box-sizing:border-box;border:1px solid #adb2b5;border-radius:3px;background:#f4f4f4;box-shadow:inset 0 0 0 1px #fcfcfc"></div>
<svg style="position:absolute;left:455px;top:567px;" width="12" height="12" viewBox="0 0 12 12"><path d="M2.2 2.2 L9.2 9.8 M9.2 2.2 L2.2 9.8" stroke="#a8a8a8" stroke-width="4" stroke-linecap="round"></path></svg>
<div style="position:absolute;left:447px;top:695px;width:26px;height:24px;box-sizing:border-box;border:1px solid #707070;border-radius:3px;background:linear-gradient(#f2f2f2 0px,#ebebeb 10px,#dddddd 11px,#cfcfcf 22px);box-shadow:inset 0 0 0 1px #fcfcfc"></div>
<svg style="position:absolute;left:452px;top:699px;" width="17" height="17" viewBox="0 0 17 17"><g stroke="#1f4d8c" stroke-width="1.5" fill="none"><path d="M0.5 0.5 L5.5 5.5 M16.5 0.5 L11.5 5.5 M0.5 16.5 L5.5 11.5 M16.5 16.5 L11.5 11.5"></path></g><g fill="#1f4d8c"><path d="M2.5 7 H7 V2.5 Z"></path><path d="M14.5 7 H10 V2.5 Z"></path><path d="M2.5 10 H7 V14.5 Z"></path><path d="M14.5 10 H10 V14.5 Z"></path></g></svg>
<svg style="position:absolute;left:473px;top:541px;" width="34" height="34" viewBox="0 0 34 34">
<rect x="2.5" y="2.5" width="31" height="31" rx="10.5" fill="#6e7a70" fill-opacity="0.7"></rect>
<rect x="0" y="0" width="31" height="31" rx="10.5" fill="#a80000"></rect>
<path d="M13.8 12.8 C14.3 10.8 18.5 10.6 18.3 13.4 C18.1 15.4 14.6 17.2 13.9 19.1 H19.3" stroke="#fff" stroke-width="1.9" fill="none"></path>
</svg>
</body></html>
